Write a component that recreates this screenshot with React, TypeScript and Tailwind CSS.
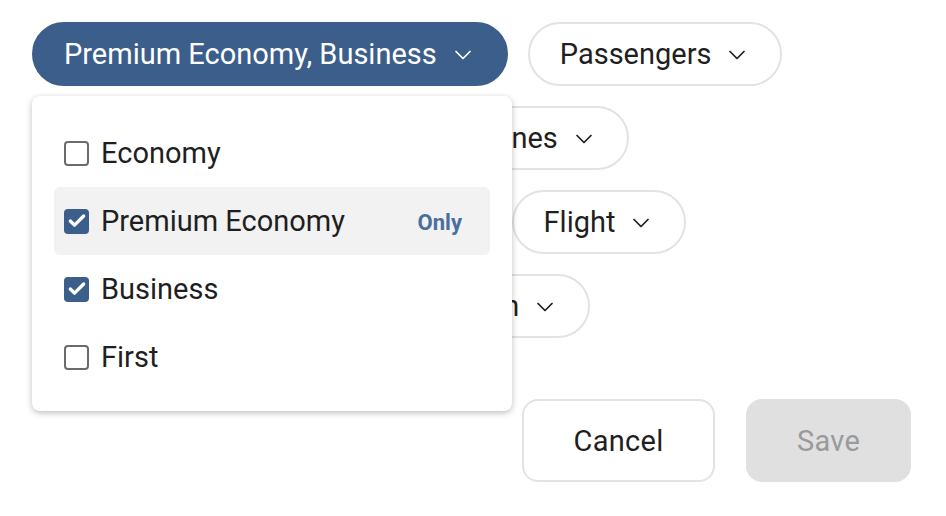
import { ChevronDown, Check } from "lucide-react";

const font = { fontFamily: "Roboto, 'Liberation Sans', sans-serif" };

type ChipProps = { label: string; active?: boolean };

function Chip({ label, active }: ChipProps) {
  return (
    <button
      className={
        active
          ? "flex h-16 shrink-0 items-center gap-3 whitespace-nowrap rounded-full border-2 border-[#3b5e8a] bg-[#3b5e8a] pl-[30px] pr-[29px] pt-[2px] text-[29px] text-white"
          : "flex h-16 shrink-0 items-center gap-3 whitespace-nowrap rounded-full border-2 border-[#e3e3e3] bg-white pl-[30px] pr-[29px] pt-[2px] text-[29px] text-[#1f1f1f]"
      }
    >
      {label}
      <ChevronDown className="h-7 w-7" strokeWidth={1.5} />
    </button>
  );
}

function Box({ checked }: { checked?: boolean }) {
  if (checked) {
    return (
      <span className="grid h-[25px] w-[25px] place-items-center rounded-[4px] bg-[#3b5e8a]">
        <Check className="h-[20px] w-[20px] text-white" strokeWidth={4} />
      </span>
    );
  }
  return <span className="h-[25px] w-[25px] rounded-[4px] border-2 border-[#6b6b6b] bg-white" />;
}

const options = [
  { label: "Economy", checked: false },
  { label: "Premium Economy", checked: true, hover: true },
  { label: "Business", checked: true },
  { label: "First", checked: false },
];

export default function App() {
  return (
    <div className="relative h-[516px] w-[946px] overflow-hidden bg-white" style={font}>
      <div className="flex flex-col gap-5 pl-8 pt-[22px]">
        <div className="flex gap-5">
          <Chip label="Premium Economy, Business" active />
          <Chip label="Passengers" />
        </div>
        <div className="flex gap-5">
          <Chip label="Connecting airport(s)" />
          <Chip label="Airlines" />
        </div>
        <div className="flex gap-5">
          <Chip label="Emissions" />
          <Chip label="Layover" />
          <Chip label="Flight" />
        </div>
        <div className="flex gap-5">
          <Chip label="Connecting cities" />
          <Chip label="Duration" />
        </div>
      </div>

      <div className="mt-[61px] flex justify-end gap-[31px] pr-[35px]">
        <button className="h-[83px] w-[193px] rounded-2xl border-2 border-[#e3e3e3] bg-white pt-[2px] text-[29px] tracking-[0.01em] text-[#1f1f1f]">
          Cancel
        </button>
        <button className="h-[83px] w-[165px] rounded-2xl bg-[#e0e0e0] pt-[2px] text-[29px] tracking-[0.01em] text-[#9a9a9a]">
          Save
        </button>
      </div>

      {/* cabin class dropdown */}
      <div className="absolute left-8 top-24 w-[480px] rounded-lg bg-white px-[22px] pb-5 pt-[23px] shadow-[0_2px_6px_rgba(0,0,0,0.25)]">
        {options.map((o) => (
          <div
            key={o.label}
            className={
              o.hover
                ? "flex h-[68px] items-center gap-3 rounded-md bg-[#f2f2f2] pl-[10px] pr-7"
                : "flex h-[68px] items-center gap-3 pl-[10px] pr-7"
            }
          >
            <Box checked={o.checked} />
            <span className="flex-1 pt-[2px] text-[29px] text-[#1f1f1f]">{o.label}</span>
            {o.hover && <span className="pt-[2px] text-[22px] font-bold text-[#4a6f9e]">Only</span>}
          </div>
        ))}
      </div>
    </div>
  );
}
